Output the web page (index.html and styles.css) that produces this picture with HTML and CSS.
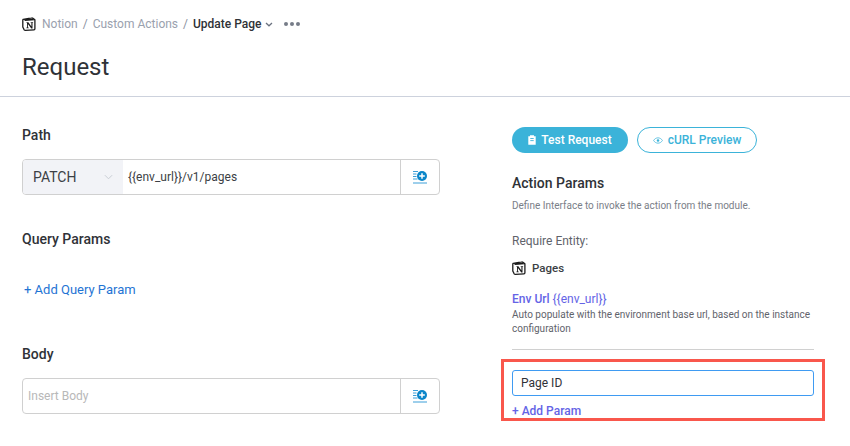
FILE: index.html
```html
<!DOCTYPE html>
<html lang="en">
<head>
<meta charset="utf-8">
<title>Request</title>
<link rel="stylesheet" href="styles.css">
</head>
<body>
<svg class="defs" width="0" height="0" aria-hidden="true">
  <symbol id="notion" viewBox="0 0 14 14">
    <path d="M1.200 2.300 9.600.9c.5-.1.9 0 1.300.3l1.600 1.200c.3.2.4.4.4.8v8.600c0 .6-.3 1-.9 1l-8.700.5c-.5 0-.8-.1-1.100-.5L1.200 10.800c-.3-.4-.4-.6-.4-1V3.200c0-.4.100-.7.4-.9z" fill="#fff" stroke="#1c1c1c" stroke-width="1.300"/>
    <path d="M1.200 2.300 3.200 3.900l9.300-.6-1.600-1.900z" fill="#1c1c1c"/>
    <path d="M4.400 5.200h2l3 4.200V6.100l-.7-.2v-.7h2.400v.7l-.6.2v5.300H9.300L5.900 6.900v3.500l.8.2v.7H4.400v-.7l.6-.2V5.900l-.6-.1z" fill="#1c1c1c"/>
  </symbol>
  <symbol id="addvar" viewBox="0 0 15 14">
    <path d="M0 1.500h5M0 4h3.500M0 6.500h3.500M0 9h4.500M0 13h14" fill="none" stroke="#3d9fd8" stroke-width="1"/>
    <circle cx="9" cy="6" r="5" fill="#0b86c9"/>
    <path d="M9 3.200v5.600M6.200 6h5.600" stroke="#fff" stroke-width="1.500"/>
  </symbol>
</svg>

<header class="page-head">
  <nav class="crumbs">
    <svg class="logo"><use href="#notion"/></svg>
    <span class="crumb">Notion</span>
    <span class="sep">/</span>
    <span class="crumb">Custom Actions</span>
    <span class="sep">/</span>
    <span class="crumb-current">Update Page</span>
    <svg class="chev" viewBox="0 0 8 5"><path d="M1 1l3 2.800L7 1" fill="none" stroke="#6b7280" stroke-width="1.300"/></svg>
    <span class="dots"><i></i><i></i><i></i></span>
  </nav>
  <h1 class="title">Request</h1>
</header>

<main class="layout">
  <section class="left">
    <h2 class="label label-path">Path</h2>
    <div class="group">
      <div class="method">
        <span>PATCH</span>
        <svg class="method-chev" viewBox="0 0 10 6"><path d="M1 1l4 4 4-4" fill="none" stroke="#c4c8d0" stroke-width="1"/></svg>
      </div>
      <div class="value">{{env_url}}/v1/pages</div>
      <div class="add-btn"><svg class="add-icon"><use href="#addvar"/></svg></div>
    </div>
    <h2 class="label label-query">Query Params</h2>
    <a class="add-query">+ Add Query Param</a>
    <h2 class="label label-body">Body</h2>
    <div class="group">
      <div class="value placeholder">Insert Body</div>
      <div class="add-btn"><svg class="add-icon"><use href="#addvar"/></svg></div>
    </div>
  </section>

  <aside class="right">
    <div class="buttons">
      <button class="btn btn-solid">
        <svg class="btn-icon-a" viewBox="0 0 8 10"><path d="M.3 1.200h1.700V.2h4v1h1.700v8.600H.3z" fill="#fff"/><path d="M2.300 3.500h3.400M2.300 5.600h3.400" stroke="#3bb3d9" stroke-width=".9"/></svg>
        Test Request
      </button>
      <button class="btn btn-outline">
        <svg class="btn-icon-b" viewBox="0 0 12 8"><path d="M.7 4C2 1.900 3.900.8 6 .8S10 1.900 11.300 4C10 6.100 8.100 7.200 6 7.200S2 6.100.7 4z" fill="none" stroke="#3bb3d9" stroke-width=".9"/><circle cx="6" cy="4" r="1.500" fill="#3bb3d9"/></svg>
        cURL Preview
      </button>
    </div>
    <h2 class="label label-action">Action Params</h2>
    <p class="hint">Define Interface to invoke the action from the module.</p>
    <p class="require">Require Entity:</p>
    <div class="entity">
      <svg class="logo"><use href="#notion"/></svg>
      <span>Pages</span>
    </div>
    <p class="env"><b>Env Url</b> {{env_url}}</p>
    <p class="env-desc">Auto populate with the environment base url, based on the instance configuration</p>
    <hr class="divider">
    <div class="highlight">
      <div class="param-input">Page ID</div>
      <a class="add-param">+ Add Param</a>
    </div>
  </aside>
</main>
</body>
</html>
```

FILE: styles.css
```css
* { box-sizing: border-box; }
html, body { margin: 0; padding: 0; }
body {
  width: 850px;
  height: 446px;
  overflow: hidden;
  background: #fff;
  font-family: Roboto, "Liberation Sans", sans-serif;
  color: #2f3237;
}
.defs { display: block; height: 0; }

.page-head {
  height: 97px;
  padding: 16px 22px 0;
  border-bottom: 1px solid #cdd2dd;
}
.crumbs {
  display: flex;
  align-items: center;
  height: 16px;
  font-size: 12px;
}
.logo { width: 14px; height: 14px; flex: none; }
.crumb { color: #9aa1ae; }
.crumbs .logo { margin-right: 6px; }
.sep { color: #8b92a0; margin: 0 5px; }
.crumb-current { color: #2f3237; font-weight: 500; }
.chev { width: 8px; height: 5px; margin-left: 3px; }
.dots { display: flex; gap: 2px; margin-left: 11px; }
.dots i { width: 4px; height: 4px; border-radius: 50%; background: #767c88; }
.title {
  margin: 18px 0 0;
  font-size: 24px;
  line-height: 34px;
  font-weight: 400;
  color: #2f3237;
}

.layout {
  display: grid;
  grid-template-columns: 418px 302px;
  column-gap: 72px;
  padding: 0 22px;
}
.label {
  margin: 0;
  font-size: 14px;
  line-height: 18px;
  font-weight: 500;
  color: #2f3237;
}
.label-path { margin-top: 29px; margin-bottom: 15px; }
.label-query { margin-top: 35px; }
.label-body { margin-top: 46px; margin-bottom: 15px; }

.group {
  display: flex;
  height: 36px;
  border: 1px solid #d0d0d0;
  border-radius: 4px;
  overflow: hidden;
}
.method {
  width: 100px;
  flex: none;
  display: flex;
  align-items: center;
  justify-content: space-between;
  padding: 0 10px;
  background: #f2f3f7;
  font-size: 14px;
  color: #3c3f45;
}
.method-chev { width: 9px; height: 6px; }
.value {
  flex: 1;
  display: flex;
  align-items: center;
  padding-left: 5px;
  font-size: 12px;
  color: #3c3f45;
}
.placeholder { color: #b8b8b8; }
.add-btn {
  width: 39px;
  flex: none;
  display: flex;
  align-items: center;
  justify-content: center;
  border-left: 1px solid #d0d0d0;
}
.add-icon { width: 15px; height: 14px; }
.add-query {
  display: block;
  margin: 33px 0 0 2px;
  font-size: 13px;
  line-height: 18px;
  color: #1f74d4;
}

.right { padding-top: 30px; }
.buttons { display: flex; gap: 9px; }
.btn {
  height: 26px;
  display: flex;
  align-items: center;
  justify-content: center;
  gap: 5px;
  border-radius: 13px;
  font-family: inherit;
  font-size: 12px;
  font-weight: 500;
  padding: 0;
}
.btn-solid { width: 116px; background: #3bb3d9; border: 0; color: #fff; }
.btn-outline { width: 120px; background: #fff; border: 1px solid #3bb3d9; color: #3bb3d9; }
.btn-icon-a { width: 8px; height: 10px; }
.btn-icon-b { width: 10px; height: 7px; }
.label-action { margin-top: 21px; }
.hint {
  margin: 7px 0 0;
  font-size: 10px;
  line-height: 14px;
  color: #7a7e87;
}
.require {
  margin: 20px 0 0;
  font-size: 12px;
  line-height: 16px;
  color: #5f636b;
}
.entity {
  display: flex;
  align-items: center;
  gap: 6px;
  height: 16px;
  margin-top: 11px;
  font-size: 11.500px;
  font-weight: 500;
  color: #3c3f45;
}
.env {
  margin: 15px 0 0;
  font-size: 12px;
  line-height: 17px;
  color: #6464e6;
}
.env b { font-weight: 500; }
.env-desc {
  margin: 0;
  font-size: 10px;
  line-height: 14px;
  color: #5f636b;
}
.divider {
  margin: 13px 0 0;
  border: 0;
  border-top: 1px solid #d0d0d0;
}
.highlight {
  margin: 9px -11px 0;
  height: 62px;
  padding: 8px 8px 0;
  border: 3px solid #f9574c;
}
.param-input {
  height: 26px;
  padding-left: 8px;
  display: flex;
  align-items: center;
  border: 1px solid #3f9bf2;
  border-radius: 3px;
  font-size: 12px;
  color: #2f3237;
}
.add-param {
  display: block;
  margin-top: 8px;
  font-size: 12px;
  line-height: 14px;
  font-weight: 500;
  color: #6464e6;
}
```
